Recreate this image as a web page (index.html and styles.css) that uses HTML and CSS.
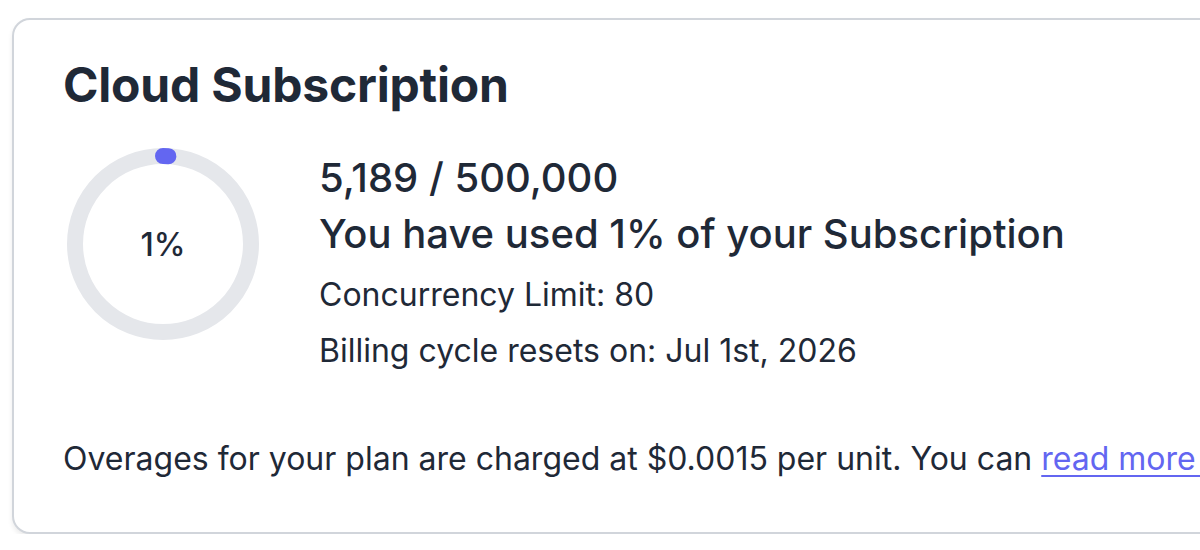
FILE: index.html
```html
<!DOCTYPE html>
<html lang="en">
<head>
<meta charset="utf-8">
<title>Cloud Subscription</title>
<link rel="stylesheet" href="styles.css">
</head>
<body>
<section class="card">
  <h2 class="title">Cloud Subscription</h2>
  <div class="usage">
    <div class="gauge">
      <svg width="196" height="196" viewBox="0 0 196 196">
        <circle cx="98" cy="98" r="88" fill="none" stroke="#e5e7eb" stroke-width="16"/>
        <circle cx="98" cy="98" r="88" fill="none" stroke="#6366f1" stroke-width="16" stroke-linecap="round" stroke-dasharray="5.53 600" transform="rotate(-90 98 98)"/>
      </svg>
      <span class="gauge-label">1%</span>
    </div>
    <div class="details">
      <p class="count">5,189 / 500,000</p>
      <p class="used">You have used 1% of your Subscription</p>
      <p class="meta">Concurrency Limit: 80</p>
      <p class="meta">Billing cycle resets on: Jul 1st, 2026</p>
    </div>
  </div>
  <p class="overages">Overages for your plan are charged at $0.0015 per unit. You can <a href="#">read more about overages</a>.</p>
</section>
</body>
</html>
```
FILE: styles.css
```css
html, body {
  margin: 0;
  padding: 0;
  background: #ffffff;
  overflow: hidden;
}
body {
  padding: 18px 0 0 12px;
  font-family: Inter, "Noto Sans", sans-serif;
  color: #1f2937;
}
.card {
  width: 1400px;
  height: 516px;
  box-sizing: border-box;
  border: 2px solid #d1d5db;
  border-radius: 18px;
  box-shadow: 0 3px 5px rgba(0, 0, 0, 0.08);
  padding: 37px 49px 40px;
  background: #fff;
}
.title {
  margin: 0;
  font-size: 48px;
  line-height: 56px;
  font-weight: 700;
  letter-spacing: -0.2px;
}
.usage {
  display: flex;
  align-items: flex-start;
  gap: 58px;
  margin-top: 37px;
}
.gauge {
  position: relative;
  width: 196px;
  height: 196px;
  margin-left: 2px;
  margin-top: -4px;
}
.gauge svg {
  display: block;
}
.gauge-label {
  position: absolute;
  inset: 0;
  display: flex;
  align-items: center;
  justify-content: center;
  font-size: 32px;
  font-weight: 500;
}
.details p {
  margin: 0;
}
.count,
.used {
  font-size: 40px;
  line-height: 56px;
  font-weight: 500;
}
.details .meta {
  font-size: 32px;
  line-height: 48px;
  margin-top: 8px;
}
.details .used + .meta {
  margin-top: 9px;
}
.overages {
  margin: 64px 0 0;
  font-size: 32px;
  line-height: 40px;
  white-space: nowrap;
}
.overages a {
  color: #6366f1;
  text-decoration: underline;
  text-underline-offset: 5px;
  text-decoration-thickness: 2px;
}
```
